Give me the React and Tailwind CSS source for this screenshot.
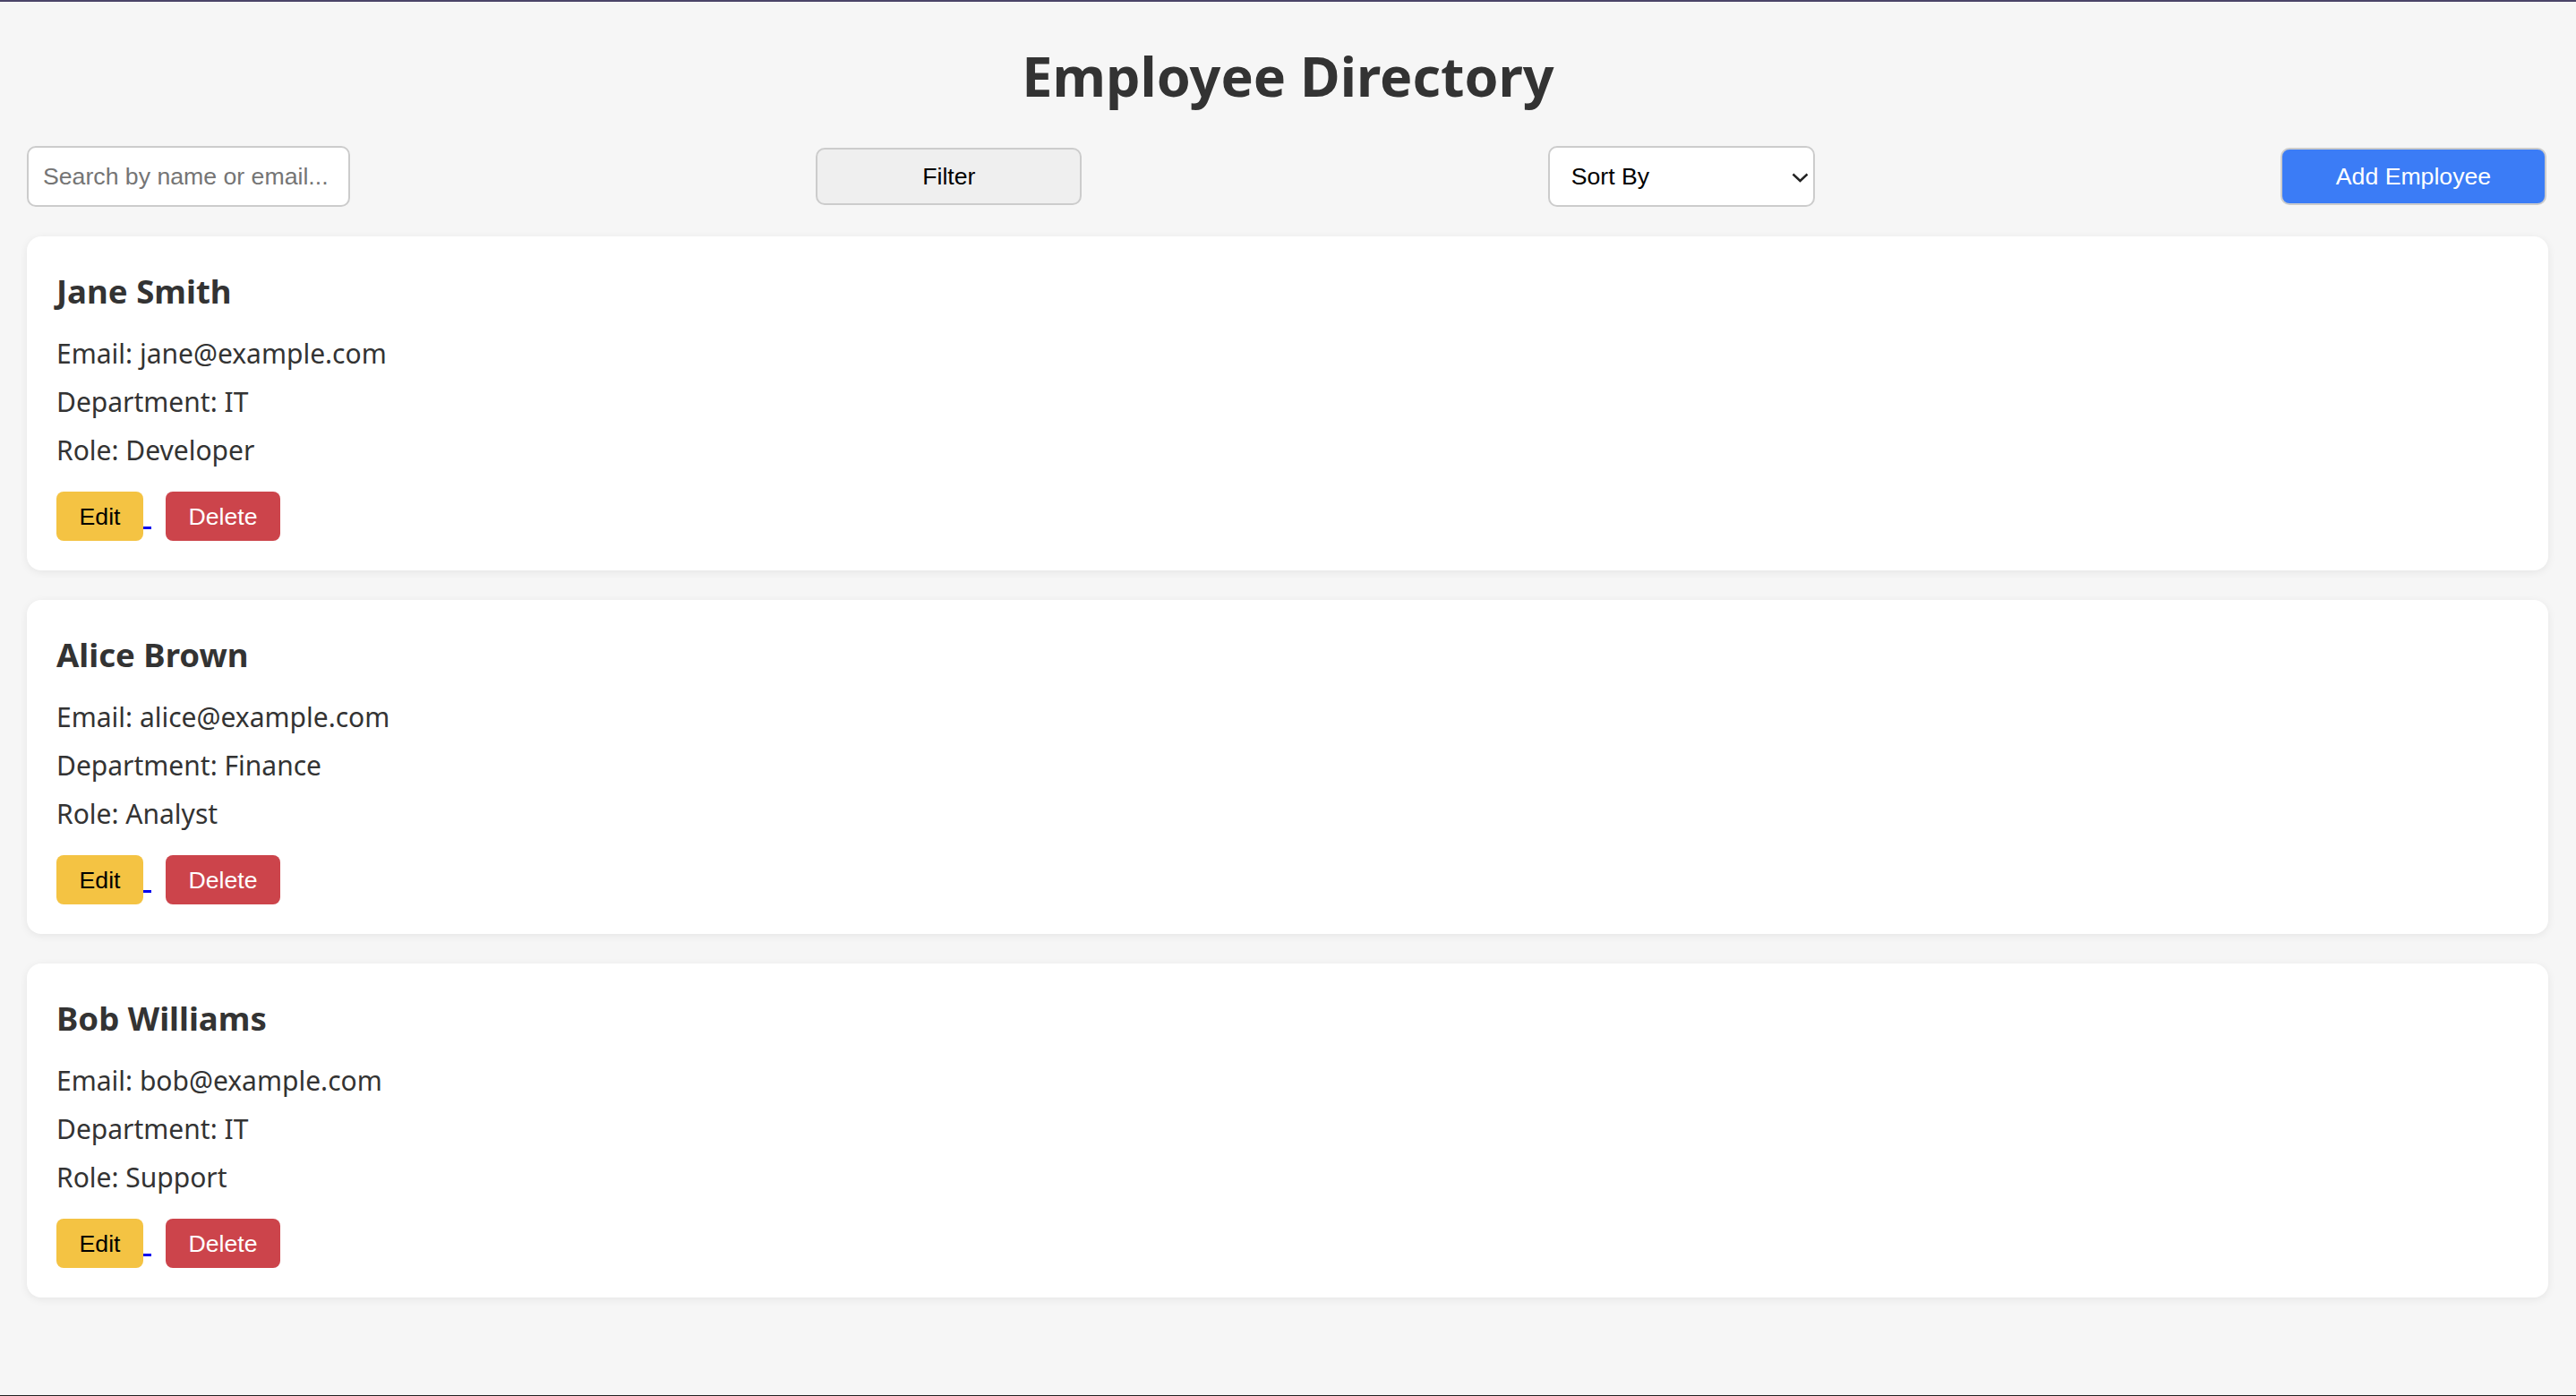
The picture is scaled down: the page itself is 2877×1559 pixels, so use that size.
import React from 'react';

const EMPLOYEES = [
    { id: 1, name: 'Jane Smith', email: 'jane@example.com', department: 'IT', role: 'Developer' },
    { id: 2, name: 'Alice Brown', email: 'alice@example.com', department: 'Finance', role: 'Analyst' },
    { id: 3, name: 'Bob Williams', email: 'bob@example.com', department: 'IT', role: 'Support' },
];

const body = "font-['Noto_Sans',sans-serif]";
const control = "font-['Liberation_Sans',Arial,sans-serif] text-[26.67px]";

function EmployeeCard({ emp }) {
    return (
        <div className={`bg-white rounded-[16px] shadow-[0_2px_10px_rgba(0,0,0,0.07)] pl-[33px] pr-[33px] pt-[39px] pb-[33px] text-[#333] ${body}`}>
            <h3 className="text-[36.6px] leading-[44px] font-bold">{emp.name}</h3>
            <div className="mt-[21px] text-[30px] leading-[54px]">
                <p>Email: {emp.email}</p>
                <p>Department: {emp.department}</p>
                <p>Role: {emp.role}</p>
            </div>
            <div className="mt-[19px] flex items-end h-[55px]">
                <button className={`h-[55px] w-[97px] bg-[#f4c343] text-black rounded-[8px] ${control}`}>Edit</button>
                <span className="w-[9px] h-[3px] bg-[#0000ee] mb-[13px]"></span>
                <button className={`h-[55px] w-[128px] ml-[16px] bg-[#cc444b] text-white rounded-[8px] ${control}`}>Delete</button>
            </div>
        </div>
    );
}

export default function App() {
    return (
        <div className="h-[1559px] bg-[#f6f6f6] border-t-2 border-t-[#4b4468] border-b border-b-[#222]">
            <h1 className={`mt-[43px] text-center text-[61px] leading-[80px] font-bold text-[#333] ${body}`}>
                Employee Directory
            </h1>

            {/* Toolbar */}
            <div className="mt-[38px] h-[68px] pl-[30px] pr-[33px] flex items-center justify-between">
                <input
                    type="text"
                    placeholder="Search by name or email..."
                    className={`w-[361px] h-[68px] bg-white border-2 border-[#ccc] rounded-[10px] px-[16px] placeholder:text-[#757575] outline-none ${control}`}
                />
                <button className={`w-[297px] h-[64px] bg-[#efefef] border-2 border-[#ccc] rounded-[10px] text-black ${control}`}>
                    Filter
                </button>
                <div className="relative w-[298px] h-[68px]">
                    <select className={`appearance-none w-full h-full bg-white border-2 border-[#ccc] rounded-[10px] pl-[24px] text-black outline-none ${control}`}>
                        <option>Sort By</option>
                        <option>Name</option>
                        <option>Department</option>
                    </select>
                    <svg className="absolute right-[7px] top-[30px] pointer-events-none" width="19" height="11" viewBox="0 0 19 11" fill="none">
                        <path d="M1.5 1.5 L9.5 9 L17.5 1.5" stroke="#222" strokeWidth="2.4" />
                    </svg>
                </div>
                <button className={`w-[297px] h-[64px] bg-[#3b7cf6] border-2 border-[#ccc] rounded-[10px] text-white ${control}`}>
                    Add Employee
                </button>
            </div>

            {/* Cards */}
            <div className="mt-[33px] pl-[30px] pr-[31px] flex flex-col gap-[33px]">
                {EMPLOYEES.map(emp => (
                    <EmployeeCard key={emp.id} emp={emp} />
                ))}
            </div>
        </div>
    );
}
